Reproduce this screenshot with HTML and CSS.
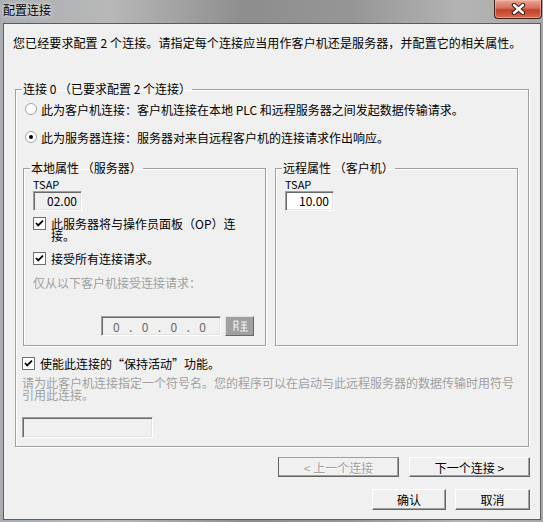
FILE: index.html
```html
<!DOCTYPE html>
<html lang="zh-CN">
<head>
<meta charset="utf-8"/>
<title>配置连接</title>
<link rel="stylesheet" href="styles.css">
</head>
<body>
<div class="titlebar">
<div class="caption">配置连接</div>
<div class="close">
<svg width="17" height="12" viewBox="0 0 17 12"><path d="M4 2 L13 10 M13 2 L4 10" stroke="#4a1a14" stroke-width="4.4" stroke-linecap="round"/><path d="M4 2 L13 10 M13 2 L4 10" stroke="#fff" stroke-width="2.4" stroke-linecap="round"/></svg>
</div>
</div>
<main class="dlg">
<div class="intro">您已经要求配置 2 个连接。请指定每个连接应当用作客户机还是服务器，并配置它的相关属性。</div>
<fieldset class="conn">
<legend>连接 0 （已要求配置 2 个连接）</legend>
<div class="opt first">
<svg class="radio" width="12" height="12" viewBox="0 0 12 12"><circle cx="6" cy="6" r="5.5" fill="#fff" stroke="#a4a4a4"/></svg>
<span>此为客户机连接：客户机连接在本地 PLC 和远程服务器之间发起数据传输请求。</span>
</div>
<div class="opt">
<svg class="radio" width="12" height="12" viewBox="0 0 12 12"><circle cx="6" cy="6" r="5.5" fill="#fff" stroke="#a4a4a4"/><circle cx="6" cy="6" r="2" fill="#000"/></svg>
<span>此为服务器连接：服务器对来自远程客户机的连接请求作出响应。</span>
</div>
<div class="groups">
<fieldset class="group">
<legend>本地属性 （服务器）</legend>
<div class="lbl tsap-lbl">TSAP</div>
<div class="field tsap ro">02.00</div>
<div class="chk-row first">
<svg class="chk" width="13" height="13" viewBox="0 0 13 13"><rect x="0.5" y="0.5" width="12" height="12" fill="#fff" stroke="#707070"/><path d="M3 6 L5.2 8.4 L10 3.6" fill="none" stroke="#000" stroke-width="1.8"/></svg>
<span class="wrap">此服务器将与操作员面板（OP）连接。</span>
</div>
<div class="chk-row second">
<svg class="chk" width="13" height="13" viewBox="0 0 13 13"><rect x="0.5" y="0.5" width="12" height="12" fill="#fff" stroke="#707070"/><path d="M3 6 L5.2 8.4 L10 3.6" fill="none" stroke="#000" stroke-width="1.8"/></svg>
<span>接受所有连接请求。</span>
</div>
<div class="lbl off">仅从以下客户机接受连接请求：</div>
<div class="ip-row">
<div class="field ip"><span>0</span><span>.</span><span>0</span><span>.</span><span>0</span><span>.</span><span>0</span></div>
<div class="browse">
<svg width="16" height="12" viewBox="0 0 16 12"><path d="M2 1 V11 M2 1 H6 V5 H2 M2 7 H6 V11 M9 2 H15 M9 5 H15 M12 2 V11 M9 8 H15 M8 11 H16" fill="none" stroke="#f4f4f4" stroke-width="1"/></svg>
</div>
</div>
</fieldset>
<fieldset class="group">
<legend>远程属性 （客户机）</legend>
<div class="lbl tsap-lbl">TSAP</div>
<div class="field tsap">10.00</div>
</fieldset>
</div>
<div class="chk-row keep">
<svg class="chk" width="13" height="13" viewBox="0 0 13 13"><rect x="0.5" y="0.5" width="12" height="12" fill="#fff" stroke="#707070"/><path d="M3 6 L5.2 8.4 L10 3.6" fill="none" stroke="#000" stroke-width="1.8"/></svg>
<span>使能此连接的“保持活动”功能。</span>
</div>
<div class="note off">请为此客户机连接指定一个符号名。您的程序可以在启动与此远程服务器的数据传输时用符号引用此连接。</div>
<div class="field name ro"></div>
</fieldset>
<div class="btn-row nav">
<div class="btn wide disabled">&lt; 上一个连接</div>
<div class="btn wide">下一个连接 &gt;</div>
</div>
<div class="btn-row">
<div class="btn ok">确认</div>
<div class="btn cancel">取消</div>
</div>
</main>
</body>
</html>
```
FILE: styles.css
```css
* {
box-sizing: border-box;
}
body {
margin: 0;
height: 522px;
overflow: hidden;
background: linear-gradient(to right, #a9adb1, #b8b8b8 20%, #8d8d8d 45%, #969696 65%, #b4b4b4 85%, #a8a8a8);
font-family: "Noto Sans CJK SC", sans-serif;
font-size: 12px;
color: #000;
}
.titlebar {
display: flex;
align-items: flex-start;
height: 23px;
}
.caption {
padding-left: 3px;
line-height: 20px;
text-shadow: 0 0 6px #e8e8e8, 0 0 3px #e8e8e8;
}
.close {
margin-left: auto;
margin-right: 1px;
width: 48px;
height: 19px;
display: flex;
align-items: center;
justify-content: center;
border: 1px solid #3b2220;
border-top: 0;
border-radius: 0 0 4px 4px;
background: linear-gradient(#e9a694, #d4705c 45%, #c2412a 55%, #d96a4c);
box-shadow: inset 0 0 0 1px rgba(255, 200, 190, 0.5);
}
.dlg {
margin-left: 3px;
width: 538px;
height: 497px;
border: 1px solid #5c5c5c;
background-color: #f0f0f0;
}
.intro {
margin: 12px 0 0 9px;
line-height: 14px;
white-space: nowrap;
letter-spacing: 0.1px;
}
fieldset {
margin: 0;
padding: 0;
min-width: 0;
border: 1px solid #a0a0a0;
box-shadow: inset 1px 1px #fff, 1px 1px #fff;
}
legend {
margin-left: 6px;
padding: 0 1px;
line-height: 14px;
}
.conn {
margin: 32px 0 0 11px;
width: 514px;
height: 365px;
}
.opt {
display: flex;
align-items: center;
gap: 4px;
height: 14px;
margin: 14px 0 0 9px;
white-space: nowrap;
}
.opt.first {
margin-top: 6px;
}
.groups {
display: flex;
gap: 9px;
margin: 17px 0 0 7px;
}
.group {
width: 243px;
height: 185px;
}
.lbl {
margin: 2px 0 0 9px;
line-height: 12px;
}
.tsap-lbl {
margin-top: 4px;
font-size: 11px;
line-height: 11px;
}
.off {
color: #a0a0a0;
}
.field {
border: 1px solid;
border-color: #a0a0a0 #fff #fff #a0a0a0;
box-shadow: inset 1px 1px #696969, inset -1px -1px #e3e3e3;
background-color: #fff;
}
.field.ro {
background-color: #f0f0f0;
}
.tsap {
margin: 1px 0 0 9px;
width: 49px;
height: 20px;
padding-right: 4px;
text-align: right;
line-height: 18px;
}
.chk-row {
display: flex;
align-items: flex-start;
gap: 5px;
margin-left: 9px;
}
.chk-row span {
line-height: 12px;
margin-top: 1px;
}
.chk-row.first {
margin-top: 6px;
}
.chk-row.second {
margin-top: 10px;
}
.chk-row .wrap {
width: 186px;
}
.group .lbl.off {
margin-top: 12px;
}
.ip-row {
display: flex;
justify-content: flex-end;
gap: 4px;
margin-top: 27px;
padding-right: 11px;
}
.ip {
width: 120px;
height: 20px;
display: flex;
align-items: center;
justify-content: space-between;
padding: 0 14px 0 11px;
color: #6a6a6a;
background-color: #f0f0f0;
}
.browse {
width: 29px;
height: 20px;
display: flex;
align-items: center;
justify-content: center;
background-color: #a0a0a0;
border: 1px solid;
border-color: #e3e3e3 #696969 #696969 #e3e3e3;
}
.chk-row.keep {
margin: 11px 0 0 6px;
}
.note {
margin: 7px 0 0 6px;
width: 496px;
line-height: 12px;
}
.name {
margin: 16px 0 0 6px;
width: 131px;
height: 21px;
}
.btn-row {
display: flex;
justify-content: flex-end;
gap: 9px;
padding-right: 10px;
margin-top: 12px;
}
.btn-row.nav {
gap: 10px;
margin-top: 10px;
}
.btn {
height: 20px;
display: flex;
align-items: center;
justify-content: center;
border: 1px solid;
border-color: #fff #646464 #646464 #fff;
box-shadow: inset -1px -1px #a0a0a0;
background-color: #f0f0f0;
}
.btn.wide {
width: 121px;
}
.btn.disabled {
color: #a0a0a0;
text-shadow: 1px 1px #fff;
border-color: #a0a0a0 #646464 #646464 #646464;
}
.btn.ok {
width: 74px;
height: 21px;
}
.btn.cancel {
width: 75px;
height: 21px;
}
```
